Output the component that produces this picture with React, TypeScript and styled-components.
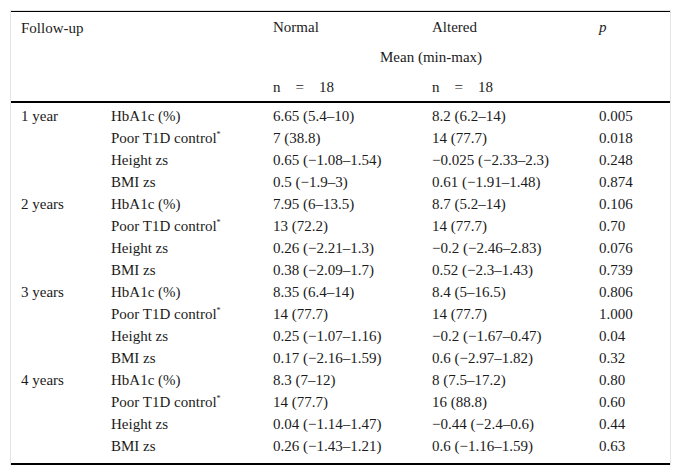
import * as React from 'react';
import styled, { createGlobalStyle } from 'styled-components';

const GlobalStyle = createGlobalStyle`
  html, body {
    margin: 0;
    padding: 0;
    background: #ffffff;
  }
`;

const Frame = styled.div`
  margin: 10px 0 0 10px;
  width: 659px;
  border: 1px solid #e4e4e4;
  border-bottom: none;
  font-family: 'Liberation Serif', 'Times New Roman', serif;
  font-size: 15px;
  line-height: 17px;
  color: #1b1b1b;
`;

const Table = styled.table`
  width: 100%;
  border-collapse: collapse;
  table-layout: fixed;
  border-top: 1px solid #000;
  border-bottom: 2px solid #000;
`;

const HeadRow = styled.tr<{ $rule?: boolean }>`
  height: 30px;
  border-bottom: ${(p) => (p.$rule ? '2px solid #000' : 'none')};
`;

const HeadCell = styled.th<{ $center?: boolean; $italic?: boolean }>`
  padding: 2px 0 0 10px;
  font-weight: normal;
  text-align: ${(p) => (p.$center ? 'center' : 'left')};
  font-style: ${(p) => (p.$italic ? 'italic' : 'normal')};
  vertical-align: middle;
  white-space: nowrap;
`;

const HeadTopCell = styled(HeadCell)`
  vertical-align: top;
  padding-top: 8px;
`;

const Row = styled.tr<{ $last?: boolean }>`
  height: ${(p) => (p.$last ? '30px' : '22px')};
`;

const Cell = styled.td<{ $last?: boolean }>`
  padding: 5px 0 ${(p) => (p.$last ? '8px' : '0')} 10px;
  white-space: nowrap;
  vertical-align: middle;
`;

const Star = styled.sup`
  font-size: 8px;
  vertical-align: 6px;
  line-height: 0;
`;

type Measure = {
  label: string;
  star?: boolean;
  normal: string;
  altered: string;
  p: string;
};

type Period = {
  year: string;
  rows: Measure[];
};

const periods: Period[] = [
  {
    year: '1 year',
    rows: [
      { label: 'HbA1c (%)', normal: '6.65 (5.4–10)', altered: '8.2 (6.2–14)', p: '0.005' },
      { label: 'Poor T1D control', star: true, normal: '7 (38.8)', altered: '14 (77.7)', p: '0.018' },
      { label: 'Height zs', normal: '0.65 (−1.08–1.54)', altered: '−0.025 (−2.33–2.3)', p: '0.248' },
      { label: 'BMI zs', normal: '0.5 (−1.9–3)', altered: '0.61 (−1.91–1.48)', p: '0.874' },
    ],
  },
  {
    year: '2 years',
    rows: [
      { label: 'HbA1c (%)', normal: '7.95 (6–13.5)', altered: '8.7 (5.2–14)', p: '0.106' },
      { label: 'Poor T1D control', star: true, normal: '13 (72.2)', altered: '14 (77.7)', p: '0.70' },
      { label: 'Height zs', normal: '0.26 (−2.21–1.3)', altered: '−0.2 (−2.46–2.83)', p: '0.076' },
      { label: 'BMI zs', normal: '0.38 (−2.09–1.7)', altered: '0.52 (−2.3–1.43)', p: '0.739' },
    ],
  },
  {
    year: '3 years',
    rows: [
      { label: 'HbA1c (%)', normal: '8.35 (6.4–14)', altered: '8.4 (5–16.5)', p: '0.806' },
      { label: 'Poor T1D control', star: true, normal: '14 (77.7)', altered: '14 (77.7)', p: '1.000' },
      { label: 'Height zs', normal: '0.25 (−1.07–1.16)', altered: '−0.2 (−1.67–0.47)', p: '0.04' },
      { label: 'BMI zs', normal: '0.17 (−2.16–1.59)', altered: '0.6 (−2.97–1.82)', p: '0.32' },
    ],
  },
  {
    year: '4 years',
    rows: [
      { label: 'HbA1c (%)', normal: '8.3 (7–12)', altered: '8 (7.5–17.2)', p: '0.80' },
      { label: 'Poor T1D control', star: true, normal: '14 (77.7)', altered: '16 (88.8)', p: '0.60' },
      { label: 'Height zs', normal: '0.04 (−1.14–1.47)', altered: '−0.44 (−2.4–0.6)', p: '0.44' },
      { label: 'BMI zs', normal: '0.26 (−1.43–1.21)', altered: '0.6 (−1.16–1.59)', p: '0.63' },
    ],
  },
];

const App = (): React.ReactElement => (
  <>
    <GlobalStyle />
    <Frame>
      <Table>
        <colgroup>
          <col style={{ width: 90 }} />
          <col style={{ width: 162 }} />
          <col style={{ width: 159 }} />
          <col style={{ width: 167 }} />
          <col />
        </colgroup>
        <thead>
          <HeadRow>
            <HeadTopCell rowSpan={3} colSpan={2}>Follow-up</HeadTopCell>
            <HeadCell>Normal</HeadCell>
            <HeadCell>Altered</HeadCell>
            <HeadCell $italic>p</HeadCell>
          </HeadRow>
          <HeadRow>
            <HeadCell colSpan={2} $center>Mean (min-max)</HeadCell>
            <HeadCell />
          </HeadRow>
          <HeadRow $rule>
            <HeadCell>n&emsp;=&emsp;18</HeadCell>
            <HeadCell>n&emsp;=&emsp;18</HeadCell>
            <HeadCell />
          </HeadRow>
        </thead>
        <tbody>
          {periods.map((period, pi) =>
            period.rows.map((m, mi) => {
              const last = pi === periods.length - 1 && mi === period.rows.length - 1;
              return (
                <Row key={`${period.year}-${m.label}`} $last={last}>
                  <Cell $last={last}>{mi === 0 ? period.year : ''}</Cell>
                  <Cell $last={last}>
                    {m.label}
                    {m.star && <Star>*</Star>}
                  </Cell>
                  <Cell $last={last}>{m.normal}</Cell>
                  <Cell $last={last}>{m.altered}</Cell>
                  <Cell $last={last}>{m.p}</Cell>
                </Row>
              );
            })
          )}
        </tbody>
      </Table>
    </Frame>
  </>
);

export default App;
